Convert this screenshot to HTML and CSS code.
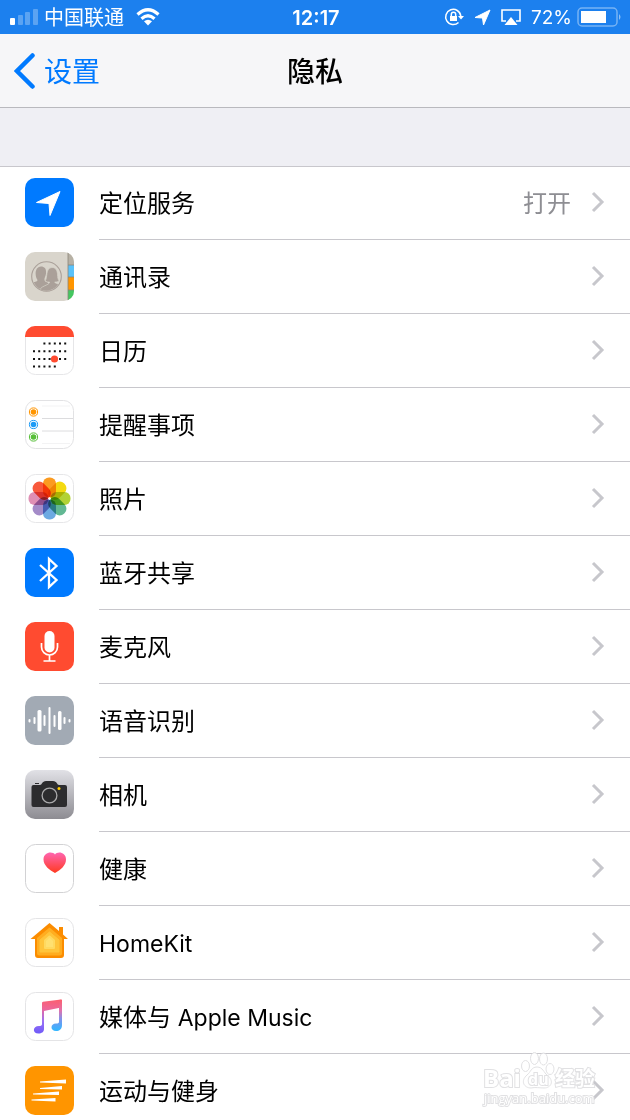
FILE: index.html
```html
<!DOCTYPE html>
<html lang="zh-CN">
<head>
<meta charset="utf-8">
<meta name="viewport" content="width=device-width, initial-scale=1">
<title>隐私</title>
<link rel="stylesheet" href="styles.css">
</head>
<body>
<div class="screen">
  <div class="status">
    <div class="status-left">
      <svg class="signal" width="28" height="18" viewBox="0 0 28 18" fill="#fff"><rect x="0" y="10" width="5" height="7" rx="1"/><g opacity=".28"><rect x="8" y="7" width="5" height="10" rx="1"/><rect x="15" y="4" width="5" height="13" rx="1"/><rect x="23" y="1" width="5" height="16" rx="1"/></g></svg>
      <span class="carrier">中国联通</span>
      <svg width="24" height="18" viewBox="0 0 24 18" fill="none" stroke="#fff" stroke-width="3.2"><path d="M1.5 6.5Q12-3 22.500 6.500"/><path d="M5.500 10.800Q12 4.800 18.500 10.800"/><path d="M12 17.500L8 13.300Q12 10 16 13.300Z" fill="#fff" stroke="none"/></svg>
    </div>
    <time class="clock">12:17</time>
    <div class="status-right">
      <svg width="20" height="20" viewBox="0 0 20 20" fill="none" stroke="#fff" stroke-width="1.500"><path d="M16.800 9A7.600 7.600 0 1 0 14.500 15.500"/><path d="M14 9h6l-3 3.500z" fill="#fff" stroke="none"/><rect x="6" y="9" width="7" height="5" fill="#fff" stroke="none"/><path d="M7.300 9V7.500a2.200 2.200 0 0 1 4.400 0V9"/></svg>
      <svg width="17" height="17" viewBox="0 0 17 17" fill="#fff"><path d="M1 8.500L16 1 9.500 16 8.500 9Z" stroke="#fff" stroke-linejoin="round"/></svg>
      <svg width="20" height="18" viewBox="0 0 20 18"><path d="M5 13H1V2h18v11h-4" fill="none" stroke="#fff" stroke-width="1.600"/><path d="M10 9l6.500 8h-13z" fill="#fff"/></svg>
      <span class="percent">72%</span>
      <svg class="battery" width="45" height="20" viewBox="0 0 45 20"><rect x="1" y="1" width="39" height="18" rx="4" fill="none" stroke="#fff" stroke-opacity=".4" stroke-width="1.500"/><rect x="4" y="4" width="25" height="12" fill="#fff"/><path d="M42 7q3 3 0 6z" fill="#fff" opacity=".5"/></svg>
    </div>
  </div>

  <header class="nav">
    <a class="back" href="#settings"><svg width="22" height="36" viewBox="0 0 22 36"><path d="M18.500 2.500L3 18l15.500 15.500" fill="none" stroke="#007aff" stroke-width="4.500" stroke-linecap="round"/></svg><span class="back-text">设置</span></a>
    <h1 class="title">隐私</h1>
  </header>

  <ul class="list">
    <li class="item"><a class="row" href="#location">
      <svg class="icon" viewBox="0 0 49 49"><rect width="49" height="49" rx="10" fill="#007aff"/><path d="M11.500 24.500L35 13.500 25 37.500 24 25.500Z" fill="#fff" stroke="#fff" stroke-linejoin="round"/></svg>
      <span class="label">定位服务</span><span class="value">打开</span><svg class="chevron" viewBox="0 0 14 22"><path d="M2 2l9 9-9 9"/></svg></a></li>
    <li class="item"><a class="row" href="#contacts">
      <svg class="icon" viewBox="0 0 49 49"><defs><clipPath id="tile"><rect width="49" height="49" rx="10"/></clipPath><clipPath id="disc"><circle cx="21.500" cy="24.500" r="14"/></clipPath></defs><g clip-path="url(#tile)"><path fill="#d9d5cc" d="M0 0h49v49H0z"/><path fill="#b7b1a5" d="M43 0h6v13h-6z"/><path fill="#5ac2fa" d="M43 13h6v12h-6z"/><path fill="#ff9500" d="M43 25h6v13h-6z"/><path fill="#44c760" d="M43 38h6v11h-6z"/><path d="M43 0v49M43 13h6M43 25h6M43 38h6" stroke="#8c8679" stroke-width=".8"/></g><circle cx="21.500" cy="24.500" r="14.800" fill="none" stroke="#aaa099" stroke-width="1.100"/><g clip-path="url(#disc)" fill="#aaa099"><path d="M16 14.500c4 0 5.500 3 5 7-.3 3-1.800 4-1.500 6.500.5 2 5 2 5 5V40H5V33c1-4 7-2 7.500-5-2.500-3-3.500-13 3.500-13.500z"/><path stroke="#d9d5cc" stroke-width=".7" d="M27 15.500c5 0 5.500 5 5.700 9 .1 2.500.8 3.500 1.500 4.500-1.500 1-3 1-4.500 1 .5 2 6 1.500 8 5V41H14c0-8 10.500-7 10.500-11-1.500 0-3 0-4.500-1 3-3 0-13 7-13.500z"/></g></svg>
      <span class="label">通讯录</span><svg class="chevron" viewBox="0 0 14 22"><path d="M2 2l9 9-9 9"/></svg></a></li>
    <li class="item"><a class="row" href="#calendars">
      <svg class="icon" viewBox="0 0 49 49"><rect x=".5" y=".5" width="48" height="48" rx="10" fill="#fff" stroke="#e6e6e8"/><path clip-path="url(#tile)" fill="#ff4b30" d="M0 0h49v11H0z"/><g stroke="#111" stroke-width="2" stroke-dasharray="2 3.200"><path d="M18.400 17.500h23"/><path d="M8 25.300h34"/><path d="M8 33h34"/><path d="M8 40.500h23"/></g><circle cx="29.500" cy="33" r="3.600" fill="#ff4b30"/></svg>
      <span class="label">日历</span><svg class="chevron" viewBox="0 0 14 22"><path d="M2 2l9 9-9 9"/></svg></a></li>
    <li class="item"><a class="row" href="#reminders">
      <svg class="icon" viewBox="0 0 49 49"><rect x=".5" y=".5" width="48" height="48" rx="10" fill="#fff" stroke="#e2e2e4"/><path d="M17 18.500h31M17 31h31" stroke="#dcdcde"/><path d="M17 6h28M17 43.500h28" stroke="#f3f3f4"/><g stroke-width="1"><circle cx="8.500" cy="12" r="2.800" fill="#ff9500"/><circle cx="8.500" cy="12" r="4.100" fill="none" stroke="#ff9500"/><circle cx="8.500" cy="24.500" r="2.800" fill="#1d9bf6"/><circle cx="8.500" cy="24.500" r="4.100" fill="none" stroke="#1d9bf6"/><circle cx="8.500" cy="37" r="2.800" fill="#57bf38"/><circle cx="8.500" cy="37" r="4.100" fill="none" stroke="#57bf38"/></g></svg>
      <span class="label">提醒事项</span><svg class="chevron" viewBox="0 0 14 22"><path d="M2 2l9 9-9 9"/></svg></a></li>
    <li class="item"><a class="row" href="#photos">
      <svg class="icon" viewBox="0 0 49 49"><rect x=".5" y=".5" width="48" height="48" rx="10" fill="#fff" stroke="#e6e6e8"/><g class="petals" transform="translate(24.500 24.500)"><rect x="-6.500" y="-21" width="13" height="20" rx="6" fill="#fb9b20"/><rect x="-6.500" y="-21" width="13" height="20" rx="6" fill="#f4da10" transform="rotate(45)"/><rect x="-6.500" y="-21" width="13" height="20" rx="6" fill="#b2d235" transform="rotate(90)"/><rect x="-6.500" y="-21" width="13" height="20" rx="6" fill="#62b893" transform="rotate(135)"/><rect x="-6.500" y="-21" width="13" height="20" rx="6" fill="#6ca9e2" transform="rotate(180)"/><rect x="-6.500" y="-21" width="13" height="20" rx="6" fill="#a48bc8" transform="rotate(225)"/><rect x="-6.500" y="-21" width="13" height="20" rx="6" fill="#df8fb4" transform="rotate(270)"/><rect x="-6.500" y="-21" width="13" height="20" rx="6" fill="#f8593c" transform="rotate(315)"/></g><circle cx="24.500" cy="24.500" r="1.300" fill="#fff"/></svg>
      <span class="label">照片</span><svg class="chevron" viewBox="0 0 14 22"><path d="M2 2l9 9-9 9"/></svg></a></li>
    <li class="item"><a class="row" href="#bluetooth">
      <svg class="icon" viewBox="0 0 49 49"><rect width="49" height="49" rx="10" fill="#007aff"/><path d="M15 17l16.500 15-7.500 7V11l7.500 7L15 33" fill="none" stroke="#fff" stroke-width="2.300"/></svg>
      <span class="label">蓝牙共享</span><svg class="chevron" viewBox="0 0 14 22"><path d="M2 2l9 9-9 9"/></svg></a></li>
    <li class="item"><a class="row" href="#microphone">
      <svg class="icon" viewBox="0 0 49 49"><rect width="49" height="49" rx="10" fill="#ff4b30"/><rect x="19.500" y="9" width="10" height="21.500" rx="5" fill="#fff"/><path d="M16.500 21v4a8 8 0 0 0 16 0v-4M24.500 33v6M18.500 39h12" fill="none" stroke="#fff" stroke-width="1.700"/></svg>
      <span class="label">麦克风</span><svg class="chevron" viewBox="0 0 14 22"><path d="M2 2l9 9-9 9"/></svg></a></li>
    <li class="item"><a class="row" href="#speech">
      <svg class="icon" viewBox="0 0 49 49"><rect width="49" height="49" rx="10" fill="#a2aab4"/><g fill="#fff"><rect x="3.500" y="23" width="2" height="3.500" rx="1"/><rect x="8.500" y="21" width="2" height="7" rx="1"/><rect x="12.500" y="14" width="4" height="21.500" rx="1.500"/><rect x="18.500" y="19" width="2" height="11" rx="1"/><rect x="23.500" y="11" width="2" height="27" rx="1"/><rect x="28.500" y="19" width="2" height="12" rx="1"/><rect x="33" y="15" width="3.500" height="19" rx="1.500"/><rect x="38.500" y="21" width="2" height="7" rx="1"/><rect x="43.500" y="23" width="2" height="3.500" rx="1"/></g></svg>
      <span class="label">语音识别</span><svg class="chevron" viewBox="0 0 14 22"><path d="M2 2l9 9-9 9"/></svg></a></li>
    <li class="item"><a class="row" href="#camera">
      <svg class="icon" viewBox="0 0 49 49"><defs><linearGradient id="silver" x2="0" y2="1"><stop stop-color="#e1e1e6"/><stop offset="1" stop-color="#8d8c92"/></linearGradient></defs><rect width="49" height="49" rx="10" fill="url(#silver)"/><path d="M10 13h4v1h-4zM8.500 15h6.500c2 0 2-4 6-4h7c4 0 4 4 6 4h6q2 0 2 2v18q0 2-2 2H8.500q-2 0-2-2V17q0-2 2-2z" fill="#2c2c2e"/><circle cx="24.500" cy="25.500" r="7.400" fill="none" stroke="#aaaaab" stroke-width="1.300"/><circle cx="34" cy="18.500" r="1.500" fill="#fc0"/></svg>
      <span class="label">相机</span><svg class="chevron" viewBox="0 0 14 22"><path d="M2 2l9 9-9 9"/></svg></a></li>
    <li class="item"><a class="row" href="#health">
      <svg class="icon" viewBox="0 0 49 49"><defs><linearGradient id="heart" x2="0" y2="1"><stop stop-color="#ff65b0"/><stop offset="1" stop-color="#ff3a20"/></linearGradient></defs><rect x=".5" y=".5" width="48" height="48" rx="10" fill="#fff" stroke="#d2d2d4"/><path d="M30 10.500c-2.500-3.500-11.500-2.500-11.500 5 0 6 6 10.500 11.500 13.500 5.500-3 11-7.500 11-13.500 0-7.500-8.500-8.500-11-5z" fill="url(#heart)"/></svg>
      <span class="label">健康</span><svg class="chevron" viewBox="0 0 14 22"><path d="M2 2l9 9-9 9"/></svg></a></li>
    <li class="item"><a class="row" href="#homekit">
      <svg class="icon" viewBox="0 0 49 49"><rect x=".5" y=".5" width="48" height="48" rx="10" fill="#fff" stroke="#e4e4e6"/><path d="M24.500 5L34 13V9h4v7.500l5 4.500H39v16q0 3-3 3H13q-3 0-3-3V21H5.500z" fill="#fb8c00"/><path d="M24.500 9.500L37 20v15q0 2.500-2.500 2.500h-20Q12 37.500 12 35V20z" fill="#ffad20"/><path d="M24.500 14L34 22v12H15V22z" fill="#ffc43a" stroke="#ffc43a" stroke-linejoin="round"/><path d="M24.500 18.500L29 22.500V30h-9v-7.500z" fill="#ffe070" stroke="#ffd95f" stroke-width="2" stroke-linejoin="round"/></svg>
      <span class="label"><span class="latin">HomeKit</span></span><svg class="chevron" viewBox="0 0 14 22"><path d="M2 2l9 9-9 9"/></svg></a></li>
    <li class="item"><a class="row" href="#music">
      <svg class="icon" viewBox="0 0 49 49"><defs><linearGradient id="note" gradientUnits="userSpaceOnUse" x1="28" y1="7" x2="25" y2="42"><stop stop-color="#fc5f6e"/><stop offset=".3" stop-color="#ed6799"/><stop offset=".65" stop-color="#9b70f5"/><stop offset="1" stop-color="#705bf8"/></linearGradient><linearGradient id="stem" gradientUnits="userSpaceOnUse" x1="35" y1="8" x2="35" y2="38"><stop stop-color="#fc5f6e"/><stop offset=".35" stop-color="#e172ad"/><stop offset=".65" stop-color="#7c95ed"/><stop offset="1" stop-color="#34b5ff"/></linearGradient></defs><rect x=".5" y=".5" width="48" height="48" rx="10" fill="#fff" stroke="#e4e4e6"/><path d="M17 11q0-1 1-1.300L36 7.500v8L19 19v18c0 3-2.500 4.500-5.500 4.500C7 41.500 7.500 34 14 34q3 0 3-2z" fill="url(#note)"/><path d="M34 8l3-.5V33c0 4-2.500 6-6 6-6 0-6-7.500 0-7.500 2.500 0 3-.5 3-2z" fill="url(#stem)"/></svg>
      <span class="label">媒体与 <span class="latin">Apple Music</span></span><svg class="chevron" viewBox="0 0 14 22"><path d="M2 2l9 9-9 9"/></svg></a></li>
    <li class="item"><a class="row" href="#motion">
      <svg class="icon" viewBox="0 0 49 49"><rect width="49" height="49" rx="10" fill="#ff9500"/><path d="M15 15.500l26-2v4l-26-1zM15 22l22-2v3.500l-22-.5zM8 27.500l26-2v3.500L8 28.500zM6.500 33.500l24-1.500v3.500l-24-1z" fill="#fff"/></svg>
      <span class="label">运动与健身</span><svg class="chevron" viewBox="0 0 14 22"><path d="M2 2l9 9-9 9"/></svg></a></li>
  </ul>

  <svg class="watermark" width="120" height="58" viewBox="0 0 120 58" fill="#fff" stroke="#dedee0">
    <text x="1" y="36" class="wm-brand">Bai</text>
    <g><ellipse cx="43.500" cy="15" rx="4" ry="5.500"/><ellipse cx="52.500" cy="7.500" rx="4" ry="6"/><ellipse cx="61.500" cy="8" rx="4" ry="6"/><ellipse cx="68" cy="18" rx="4" ry="5.500"/><path d="M55 16c6 0 7 6 10 8 8 6 4 13-3 13-4 0-9-1-13 0-7 0-11-7-4-13 4-3 4-8 10-8z"/></g>
    <text x="46" y="34" class="wm-du">du</text>
    <text x="73" y="35" class="wm-cjk">经验</text>
    <text x="2" y="52" class="wm-url">jingyan.baidu.com</text>
  </svg>
</div>
</body>
</html>
```
FILE: styles.css
```css
* { box-sizing: border-box; }

body {
  margin: 0;
  background: #fff;
  color: #000;
  font-family: Inter, "Noto Sans CJK SC", sans-serif;
}

a { color: inherit; text-decoration: none; }
svg { display: block; flex: none; }

.screen {
  position: relative;
  height: 100vh;
  overflow: hidden auto;
  scrollbar-width: none;
  background: #efeff4;
}

.status {
  display: grid;
  grid-template-columns: 1fr auto 1fr;
  align-items: center;
  height: 34px;
  padding: 0 8px 0 10px;
  background: #1c80ee;
  color: #fff;
  font-size: 20px;
  line-height: 24px;
}
.status-left { display: flex; align-items: center; }
.carrier { margin: 0 12px 0 6px; padding-top: 2px; }
.clock { padding-top: 2px; font-weight: 600; }
.status-right { display: flex; align-items: center; justify-content: flex-end; gap: 10px; }
.percent { padding-top: 2px; font-size: 19px; }
.battery { margin-left: -5px; }

.nav {
  display: grid;
  grid-template-columns: 1fr auto 1fr;
  align-items: center;
  height: 74px;
  padding: 0 14px;
  border-bottom: 1px solid #b9b9be;
  background: #f6f6f8;
  font-size: 28px;
  line-height: 36px;
}
.back { display: flex; align-items: center; gap: 8px; color: #007aff; }
.back-text { padding-top: 2px; }
.title { margin: 0; padding-top: 2px; font-size: 28px; font-weight: 500; }

.list {
  margin: 58px 0 0;
  padding: 0;
  background: #fff;
  box-shadow: inset 0 1px #c8c7cc;
  list-style: none;
}
.row {
  display: flex;
  align-items: center;
  height: 74px;
  padding: 0 0 2px 25px;
}
.icon { width: 49px; height: 49px; }
.label {
  flex: 1;
  margin-left: 25px;
  padding-top: 4px;
  font-size: 24px;
  line-height: 32px;
}
.latin { font-size: 23px; }
.value { margin-right: 20px; padding-top: 4px; color: #8e8e93; font-size: 24px; line-height: 32px; }
.chevron {
  width: 14px;
  height: 22px;
  margin-right: 25px;
  fill: none;
  stroke: #c7c7cc;
  stroke-width: 3;
}
.item {
  background: linear-gradient(#c8c7cc, #c8c7cc) 99px 100% / 100% 1px no-repeat;
}

.petals { isolation: isolate; }
.petals rect { mix-blend-mode: multiply; }

.watermark {
  position: absolute;
  right: 28px;
  top: 1051px;
  opacity: 0.9;
}
.watermark text { paint-order: stroke; stroke-width: 2px; font-family: "Open Sans", "Noto Sans CJK SC", sans-serif; }
.wm-brand { font-size: 24px; font-weight: 700; }
.wm-du { font-size: 16px; font-weight: 700; }
.wm-cjk { font-size: 20px; font-weight: 700; }
.wm-url { font-size: 13px; }
```
